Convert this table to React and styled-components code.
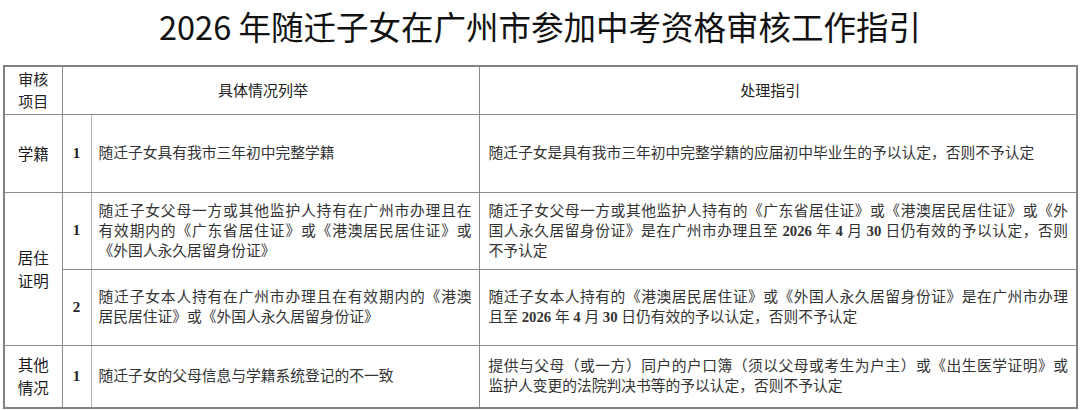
import React from 'react';
import styled, { createGlobalStyle } from 'styled-components';

const GlobalStyle = createGlobalStyle`
  html, body {
    margin: 0;
    padding: 0;
    background: #ffffff;
  }

  body {
    font-family: "Liberation Serif", "Noto Sans CJK SC", serif;
    color: #333333;
  }
`;

const Page = styled.div`
  width: 1080px;
  height: 410px;
  padding-top: 6px;
  box-sizing: border-box;
`;

const Title = styled.h1`
  margin: 0 0 19px;
  height: 40px;
  line-height: 40px;
  text-align: center;
  font-family: "Noto Sans CJK SC", "Noto Sans", sans-serif;
  font-size: 32.5px;
  font-weight: 400;
  color: #111111;
`;

const Table = styled.table`
  margin-left: 3px;
  width: 1073px;
  table-layout: fixed;
  border-collapse: collapse;
  border: 2px solid #828282;
`;

const Row = styled.tr`
  height: ${(p) => p.$h}px;
`;

const Cell = styled.td`
  border: 1px solid #8a8a8a;
  padding: 0;
  vertical-align: middle;
  box-sizing: border-box;
`;

const HeadCell = styled(Cell)`
  text-align: center;
  font-family: "Noto Sans CJK SC", "Noto Sans", sans-serif;
  font-size: 15px;
  line-height: 22px;
  color: #222222;
  padding-right: ${(p) => (p.$shift ? 15 : 0)}px;
`;

const LabelCell = styled(Cell)`
  text-align: center;
  font-family: "Noto Sans CJK SC", "Noto Sans", sans-serif;
  font-size: 15.5px;
  font-weight: 400;
  line-height: 23px;
  color: #1a1a1a;
`;

const NumCell = styled(Cell)`
  text-align: center;
  font-family: "Liberation Serif", serif;
  font-weight: 700;
  font-size: 15px;
  color: #222222;
  border-right-color: #b4b4b4;
`;

const TextCell = styled(Cell)`
  padding: 0 ${(p) => (p.$wide ? 8 : 7)}px 0 ${(p) => (p.$wide ? 9 : 7)}px;
  font-size: 14.75px;
  line-height: 20px;
  color: #333333;
`;

const Line = styled.div`
  white-space: nowrap;
  text-align: justify;
  text-align-last: ${(p) => (p.$fill ? 'justify' : 'left')};
`;

const Num = styled.b`
  font-weight: 700;
`;

const Lines = ({ lines }) => (
  <>
    {lines.map((line, i) => (
      <Line key={i} $fill={i < lines.length - 1}>
        {line}
      </Line>
    ))}
  </>
);

const date = (
  <>
    <Num>2026</Num> 年 <Num>4</Num> 月 <Num>30</Num> 日
  </>
);

const App = () => (
  <>
    <GlobalStyle />
    <Page>
      <Title>2026 年随迁子女在广州市参加中考资格审核工作指引</Title>
      <Table>
        <colgroup>
          <col style={{ width: 58 }} />
          <col style={{ width: 29 }} />
          <col style={{ width: 388 }} />
          <col style={{ width: 598 }} />
        </colgroup>
        <tbody>
          <Row $h={48}>
            <HeadCell>
              审核
              <br />
              项目
            </HeadCell>
            <HeadCell colSpan={2} $shift>
              具体情况列举
            </HeadCell>
            <HeadCell $shift>处理指引</HeadCell>
          </Row>
          <Row $h={78}>
            <LabelCell>学籍</LabelCell>
            <NumCell>1</NumCell>
            <TextCell>
              <Lines lines={['随迁子女具有我市三年初中完整学籍']} />
            </TextCell>
            <TextCell $wide>
              <Lines lines={['随迁子女是具有我市三年初中完整学籍的应届初中毕业生的予以认定，否则不予认定']} />
            </TextCell>
          </Row>
          <Row $h={77}>
            <LabelCell rowSpan={2}>
              居住
              <br />
              证明
            </LabelCell>
            <NumCell>1</NumCell>
            <TextCell>
              <Lines
                lines={[
                  '随迁子女父母一方或其他监护人持有在广州市办理且在',
                  '有效期内的《广东省居住证》或《港澳居民居住证》或',
                  '《外国人永久居留身份证》',
                ]}
              />
            </TextCell>
            <TextCell $wide>
              <Lines
                lines={[
                  '随迁子女父母一方或其他监护人持有的《广东省居住证》或《港澳居民居住证》或《外',
                  <>国人永久居留身份证》是在广州市办理且至 {date}仍有效的予以认定，否则</>,
                  '不予认定',
                ]}
              />
            </TextCell>
          </Row>
          <Row $h={76}>
            <NumCell>2</NumCell>
            <TextCell>
              <Lines
                lines={[
                  '随迁子女本人持有在广州市办理且在有效期内的《港澳',
                  '居民居住证》或《外国人永久居留身份证》',
                ]}
              />
            </TextCell>
            <TextCell $wide>
              <Lines
                lines={[
                  '随迁子女本人持有的《港澳居民居住证》或《外国人永久居留身份证》是在广州市办理',
                  <>且至 {date}仍有效的予以认定，否则不予认定</>,
                ]}
              />
            </TextCell>
          </Row>
          <Row $h={63}>
            <LabelCell>
              其他
              <br />
              情况
            </LabelCell>
            <NumCell>1</NumCell>
            <TextCell>
              <Lines lines={['随迁子女的父母信息与学籍系统登记的不一致']} />
            </TextCell>
            <TextCell $wide>
              <Lines
                lines={[
                  '提供与父母（或一方）同户的户口簿（须以父母或考生为户主）或《出生医学证明》或',
                  '监护人变更的法院判决书等的予以认定，否则不予认定',
                ]}
              />
            </TextCell>
          </Row>
        </tbody>
      </Table>
    </Page>
  </>
);

export default App;
